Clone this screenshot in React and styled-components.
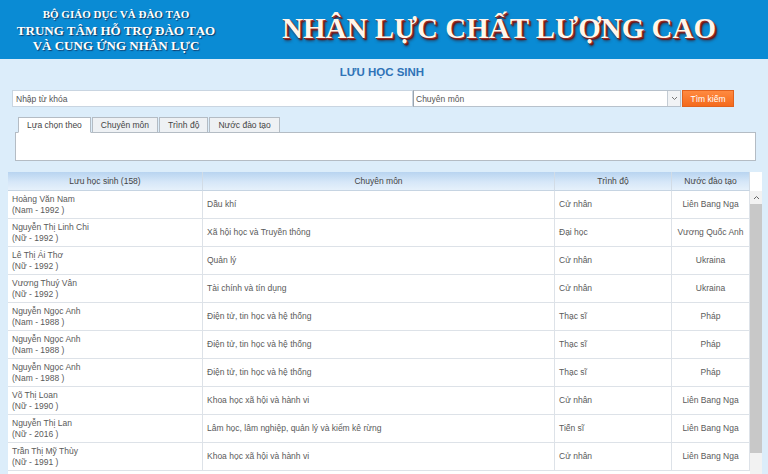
import React from 'react';
import styled, { createGlobalStyle } from 'styled-components';

const rows = [
    { name: 'Hoàng Văn Nam', info: '(Nam - 1992 )', major: 'Dầu khí', level: 'Cử nhân', country: 'Liên Bang Nga' },
    { name: 'Nguyễn Thị Linh Chi', info: '(Nữ - 1992 )', major: 'Xã hội học và Truyền thông', level: 'Đại học', country: 'Vương Quốc Anh' },
    { name: 'Lê Thị Ái Thơ', info: '(Nữ - 1992 )', major: 'Quản lý', level: 'Cử nhân', country: 'Ukraina' },
    { name: 'Vương Thuý Vân', info: '(Nữ - 1992 )', major: 'Tài chính và tín dụng', level: 'Cử nhân', country: 'Ukraina' },
    { name: 'Nguyễn Ngọc Anh', info: '(Nam - 1988 )', major: 'Điện tử, tin học và hệ thống', level: 'Thạc sĩ', country: 'Pháp' },
    { name: 'Nguyễn Ngọc Anh', info: '(Nam - 1988 )', major: 'Điện tử, tin học và hệ thống', level: 'Thạc sĩ', country: 'Pháp' },
    { name: 'Nguyễn Ngọc Anh', info: '(Nam - 1988 )', major: 'Điện tử, tin học và hệ thống', level: 'Thạc sĩ', country: 'Pháp' },
    { name: 'Võ Thị Loan', info: '(Nữ - 1990 )', major: 'Khoa học xã hội và hành vi', level: 'Cử nhân', country: 'Liên Bang Nga' },
    { name: 'Nguyễn Thị Lan', info: '(Nữ - 2016 )', major: 'Lâm học, lâm nghiệp, quản lý và kiểm kê rừng', level: 'Tiến sĩ', country: 'Liên Bang Nga' },
    { name: 'Trần Thị Mỹ Thùy', info: '(Nữ - 1991 )', major: 'Khoa học xã hội và hành vi', level: 'Cử nhân', country: 'Liên Bang Nga' },
];

const tabs = ['Lựa chọn theo', 'Chuyên môn', 'Trình độ', 'Nước đào tạo'];

function App() {
    return (
        <Page>
            <GlobalStyle />
            <Header>
                <Org>
                    <OrgTop>BỘ GIÁO DỤC VÀ ĐÀO TẠO</OrgTop>
                    <OrgName>TRUNG TÂM HỖ TRỢ ĐÀO TẠO</OrgName>
                    <OrgName>VÀ CUNG ỨNG NHÂN LỰC</OrgName>
                </Org>
                <Banner>NHÂN LỰC CHẤT LƯỢNG CAO</Banner>
            </Header>

            <Content>
                <Title>LƯU HỌC SINH</Title>

                <SearchRow>
                    <KeywordInput>Nhập từ khóa</KeywordInput>
                    <Select>
                        <span>Chuyên môn</span>
                        <SelectArrow>
                            <svg width="7" height="5" viewBox="0 0 7 5">
                                <path d="M1 1 L3.5 3.5 L6 1" fill="none" stroke="#777" strokeWidth="1" />
                            </svg>
                        </SelectArrow>
                    </Select>
                    <SearchButton>Tìm kiếm</SearchButton>
                </SearchRow>

                <Tabs>
                    {tabs.map((t, i) => (
                        <Tab key={t} active={i === 0}>{t}</Tab>
                    ))}
                </Tabs>
                <TabPanel />

                <Table>
                    <HeadRow>
                        <HeadCell>Lưu học sinh (158)</HeadCell>
                        <HeadCell>Chuyên môn</HeadCell>
                        <HeadCell>Trình độ</HeadCell>
                        <HeadCell>Nước đào tạo</HeadCell>
                        <HeadSpacer />
                    </HeadRow>
                    <Body>
                        <Rows>
                            {rows.map((r, i) => (
                                <Row key={i}>
                                    <Cell>
                                        <div>{r.name}</div>
                                        <div>{r.info}</div>
                                    </Cell>
                                    <Cell>{r.major}</Cell>
                                    <Cell>{r.level}</Cell>
                                    <Cell center>{r.country}</Cell>
                                </Row>
                            ))}
                        </Rows>
                        <Scrollbar>
                            <ScrollUp>
                                <svg width="7" height="5" viewBox="0 0 7 5">
                                    <path d="M1 4 L3.5 1.5 L6 4" fill="none" stroke="#666" strokeWidth="1" />
                                </svg>
                            </ScrollUp>
                            <Thumb />
                        </Scrollbar>
                    </Body>
                </Table>
            </Content>
        </Page>
    );
}

export default App;

const GlobalStyle = createGlobalStyle`
    html, body {
        margin: 0;
        padding: 0;
        overflow: hidden;
        background: #dcedfa;
    }
`;

const Page = styled.div`
    width: 768px;
    height: 474px;
    overflow: hidden;
    font-family: "Liberation Sans", Arial, sans-serif;
    background: #dcedfa;
`;

const Header = styled.div`
    height: 59px;
    background: #0a8bd4;
    display: flex;
    align-items: center;
`;

const Org = styled.div`
    width: 232px;
    padding-top: 2px;
    display: flex;
    flex-direction: column;
    align-items: center;
    font-family: "Liberation Serif", "Times New Roman", serif;
    color: #fff;
    text-shadow: 1px 1px 1px #123a66;
`;

const OrgTop = styled.div`
    font-size: 11px;
    font-weight: bold;
    line-height: 12px;
    margin-bottom: 3px;
`;

const OrgName = styled.div`
    font-size: 13px;
    font-weight: bold;
    line-height: 15px;
`;

const Banner = styled.div`
    margin-left: 50px;
    margin-top: -2px;
    white-space: nowrap;
    font-family: "Liberation Serif", "Times New Roman", serif;
    font-weight: bold;
    font-size: 29px;
    color: #fff6ec;
    text-shadow: 1px 1px 0 #9b2a22, 2px 2px 1px #6e1410, 2px 3px 3px rgba(60, 0, 0, 0.6);
`;

const Content = styled.div`
    padding: 6px 6px 0 8px;
`;

const Title = styled.div`
    text-align: center;
    font-weight: bold;
    font-size: 11.5px;
    color: #2f73b7;
    line-height: 14px;
    padding-right: 6px;
`;

const SearchRow = styled.div`
    margin: 11px 0 0 4px;
    display: flex;
    height: 17px;
`;

const KeywordInput = styled.div`
    width: 396px;
    background: #fff;
    border: 1px solid #c9d5e1;
    font-size: 8.5px;
    color: #555;
    padding-left: 3px;
    display: flex;
    align-items: center;
`;

const Select = styled.div`
    width: 264px;
    background: #fff;
    border: 1px solid #b8c2cc;
    border-left-color: #9aa4ae;
    font-size: 8.5px;
    color: #555;
    padding-left: 2px;
    display: flex;
    align-items: center;
    justify-content: space-between;
`;

const SelectArrow = styled.div`
    width: 12px;
    height: 100%;
    border-left: 1px solid #c4ccd4;
    background: #f1f3f5;
    display: flex;
    align-items: center;
    justify-content: center;
`;

const SearchButton = styled.div`
    width: 50px;
    margin-left: 1px;
    background: linear-gradient(#ff8a40, #f46a1c);
    border: 1px solid #e0621e;
    color: #fff;
    font-size: 8.5px;
    display: flex;
    align-items: center;
    justify-content: center;
`;

const Tabs = styled.div`
    display: flex;
    margin: 10px 0 0 10px;
    height: 15px;
`;

const Tab = styled.div`
    padding: 0 8px;
    font-size: 8.5px;
    color: #444;
    display: flex;
    align-items: center;
    background: ${p => (p.active ? '#fff' : '#eef1f4')};
    border: 1px solid #b4bcc4;
    border-bottom-color: ${p => (p.active ? '#fff' : '#b4bcc4')};
    margin-right: 1px;
    position: relative;
    z-index: 1;
    margin-bottom: -1px;
`;

const TabPanel = styled.div`
    margin-left: 7px;
    width: 739px;
    height: 27px;
    background: #fff;
    border: 1px solid #b4bcc4;
`;

const Table = styled.div`
    margin-top: 11px;
    width: 754px;
    background: #fff;
`;

const columns = '195px 352px 117px 78px';

const HeadRow = styled.div`
    display: grid;
    grid-template-columns: ${columns} 12px;
    height: 19px;
`;

const HeadCell = styled.div`
    background: linear-gradient(#b8d4f0, #d6e7f8 55%, #e6f1fb);
    border-right: 1px solid #d2dce6;
    border-bottom: 1px solid #c6d4e2;
    font-size: 8.5px;
    color: #444;
    display: flex;
    align-items: center;
    justify-content: center;
`;

const HeadSpacer = styled.div`
    background: #fff;
`;

const Body = styled.div`
    display: flex;
`;

const Rows = styled.div`
    width: 742px;
`;

const Row = styled.div`
    display: grid;
    grid-template-columns: ${columns};
    height: 28px;
    border-bottom: 1px solid #dde2e8;
    box-sizing: border-box;
`;

const Cell = styled.div`
    border-right: 1px solid #dde2e8;
    font-size: 8.5px;
    line-height: 11px;
    color: #5a5a5a;
    padding: 0 4px;
    display: flex;
    flex-direction: column;
    justify-content: center;
    align-items: ${p => (p.center ? 'center' : 'flex-start')};
`;

const Scrollbar = styled.div`
    width: 12px;
    height: 290px;
    background: #f2f2f2;
    display: flex;
    flex-direction: column;
`;

const ScrollUp = styled.div`
    height: 13px;
    display: flex;
    align-items: center;
    justify-content: center;
`;

const Thumb = styled.div`
    height: 249px;
    background: #c8c8c8;
`;
